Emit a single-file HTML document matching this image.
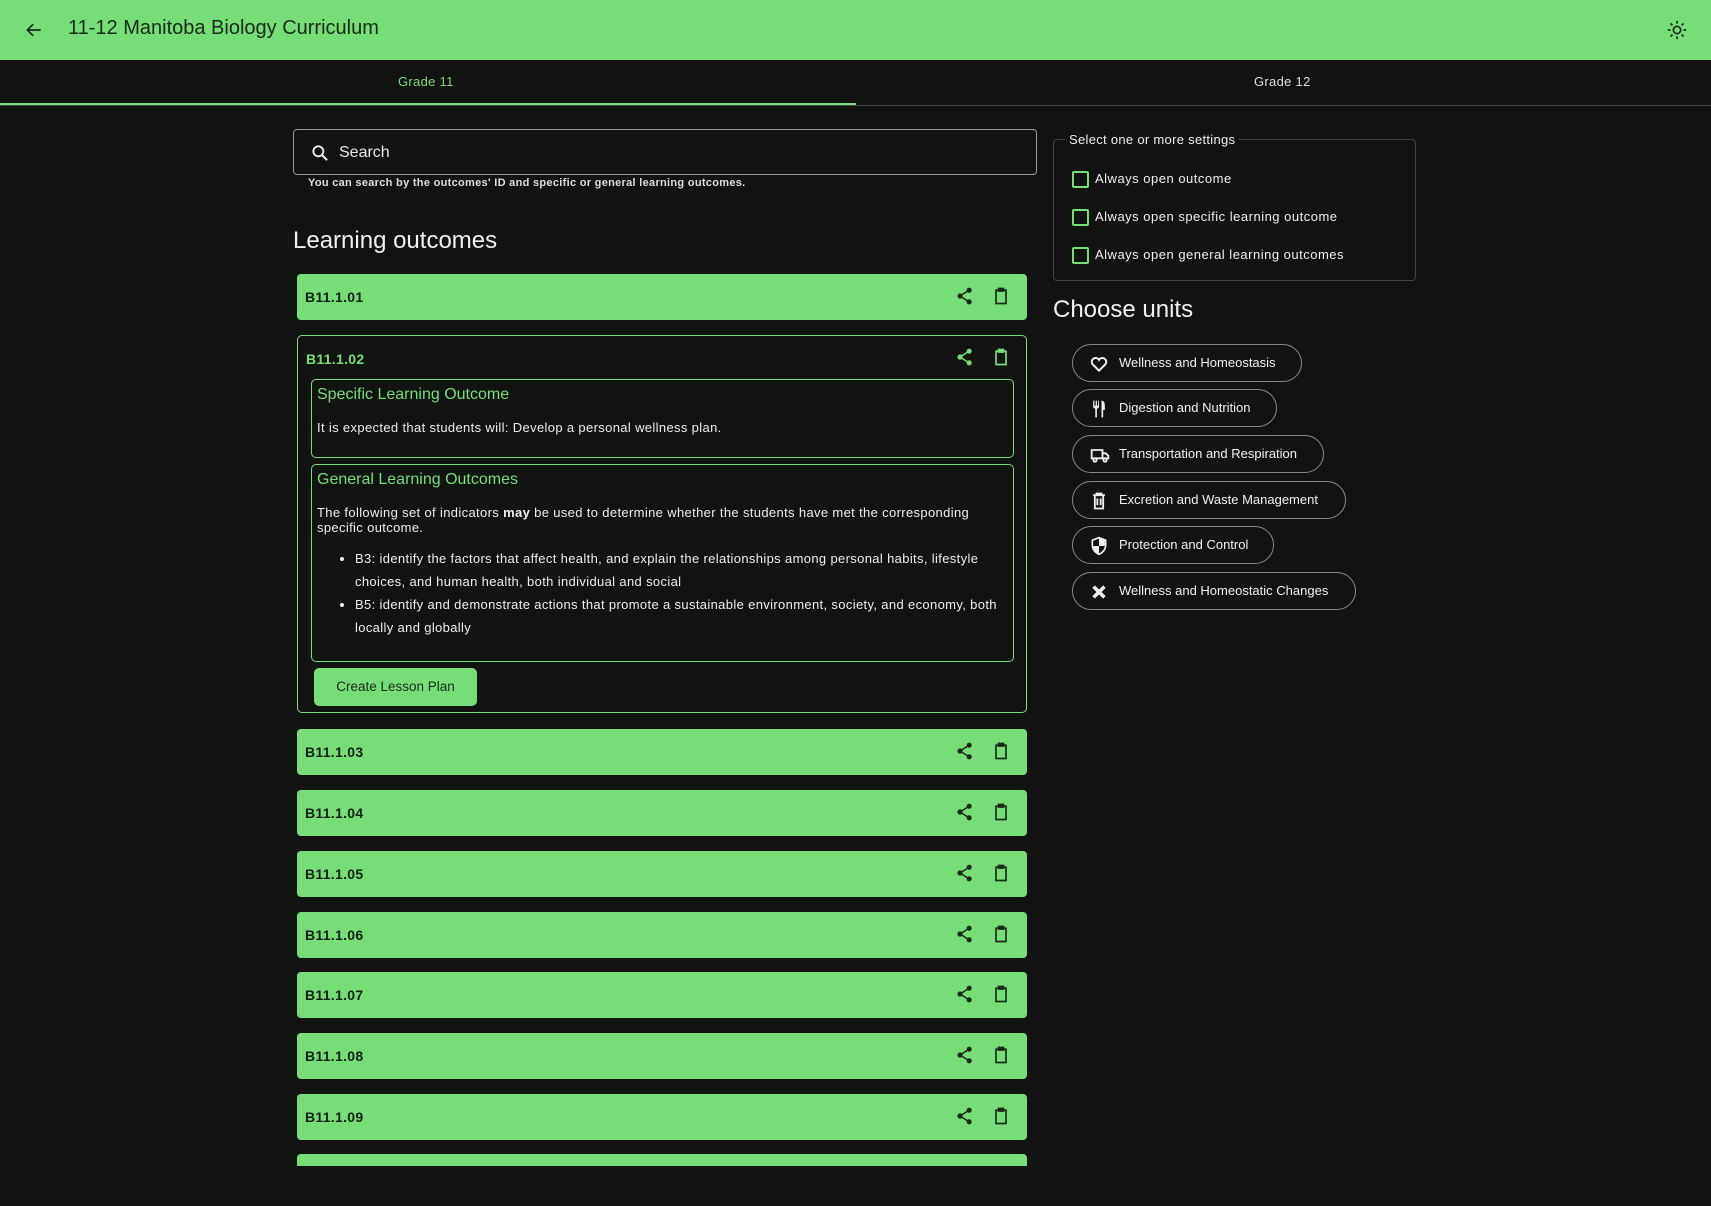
<!DOCTYPE html>
<html><head><meta charset="utf-8"><style>
*{box-sizing:border-box;margin:0;padding:0}
body{width:1711px;height:1199px;background:#121412;font-family:"Liberation Sans",sans-serif;color:#e8e8e8;position:relative;overflow:hidden}
.hdr{position:absolute;left:0;top:0;width:1711px;height:60px;background:#77dd77}
.hdr .t{position:absolute;left:68px;top:17px;font-size:20px;color:#1a2a1a}
.tabs{position:absolute;top:60px;left:0;width:1711px;height:46px;border-bottom:1px solid #444}
.tab{position:absolute;top:14px;font-size:13px;letter-spacing:.3px}
.ind{position:absolute;left:0;top:103px;width:856px;height:2px;background:#77dd77}
.search{position:absolute;left:293px;top:129px;width:744px;height:46px;border:1px solid #999;border-radius:4px}
.search span{position:absolute;left:45px;top:14px;font-size:16px;color:#e8e8e8}
.help{position:absolute;left:308px;top:177px;font-size:11px;color:#ddd;letter-spacing:.3px;font-weight:bold}
h2{position:absolute;font-weight:400;font-size:24px;color:#f0f0f0}
.card{position:absolute;left:297px;width:730px;height:46px;background:#77dd77;border-radius:4px}
.card b,.exp b{position:absolute;left:8px;top:15px;font-size:14px;color:#152015;letter-spacing:.3px}
.exp{position:absolute;left:297px;top:335px;width:730px;height:378px;border:1px solid #77dd77;border-radius:5px}
.exp b{color:#77dd77;top:15px}
.box{position:absolute;left:13px;width:703px;border:1px solid #77dd77;border-radius:5px;padding:6px 5px}
.box h3{font-weight:400;font-size:16px;color:#77dd77}
.box p{font-size:13px;color:#eee;line-height:15px;letter-spacing:.35px}
.box ul{margin:12px 0 0 38px;font-size:13px;line-height:23px;color:#eee;letter-spacing:.35px}
.btn{position:absolute;left:16px;top:332px;width:163px;height:38px;background:#77dd77;border-radius:5px;color:#1a2a1a;font-size:13.5px;text-align:center;line-height:38px}
fieldset{position:absolute;left:1053px;top:132px;width:363px;height:149px;border:1px solid #444;border-radius:4px}
legend{margin-left:11px;padding:0 4px;font-size:13px;color:#eee;letter-spacing:.3px}
.cb{position:absolute;left:1072px;font-size:13px;color:#eee;letter-spacing:.5px}
.cb i{display:inline-block;width:17px;height:17px;border:2px solid #77dd77;border-radius:2px;vertical-align:middle;margin-right:6px}
.chip{position:absolute;left:1072px;height:38px;border:1px solid #888;border-radius:19px;font-size:13px;color:#f0f0f0;line-height:36px;padding-left:46px}
.chip svg{position:absolute;left:16px;top:9px}
</style></head><body>
<div class="hdr">
<svg style="position:absolute;left:24px;top:20px" width="20" height="20" viewBox="0 0 24 24"><path d="M20 12H5M11 5l-7 7 7 7" fill="none" stroke="#1a2a1a" stroke-width="2"/></svg>
<div class="t">11-12 Manitoba Biology Curriculum</div>
<svg style="position:absolute;left:1666px;top:19px" width="22" height="22" viewBox="0 0 24 24" fill="none" stroke="#1a2a1a" stroke-width="1.8"><circle cx="12" cy="12" r="4"/><path d="M12 2v3M12 19v3M2 12h3M19 12h3M4.9 4.9l2.1 2.1M17 17l2.1 2.1M4.9 19.1L7 17M17 7l2.1-2.1"/></svg>
</div>
<div class="tabs"><div class="tab" style="left:398px;color:#77dd77">Grade 11</div><div class="tab" style="left:1254px;color:#ddd">Grade 12</div></div>
<div class="ind"></div>
<div class="search"><svg style="position:absolute;left:16px;top:13px" width="20" height="20" viewBox="0 0 24 24"><circle cx="10" cy="10" r="6" fill="none" stroke="#eee" stroke-width="2.2"/><path d="M14.5 14.5l6 6" stroke="#eee" stroke-width="2.5"/></svg><span>Search</span></div>
<div class="help">You can search by the outcomes' ID and specific or general learning outcomes.</div>
<h2 style="left:293px;top:227px">Learning outcomes</h2>
<h2 style="left:1053px;top:296px">Choose units</h2>

<div class="card" style="top:274px"><b>B11.1.01</b></div>
<div class="exp"><b>B11.1.02</b>
<div class="box" style="top:43px;height:79px"><h3>Specific Learning Outcome</h3><p style="margin-top:16px">It is expected that students will: Develop a personal wellness plan.</p></div>
<div class="box" style="top:128px;height:198px"><h3>General Learning Outcomes</h3><p style="margin-top:16px">The following set of indicators <strong>may</strong> be used to determine whether the students have met the corresponding specific outcome.</p>
<ul><li>B3: identify the factors that affect health, and explain the relationships among personal habits, lifestyle choices, and human health, both individual and social</li><li>B5: identify and demonstrate actions that promote a sustainable environment, society, and economy, both locally and globally</li></ul></div>
<div class="btn">Create Lesson Plan</div>
</div>
<div class="card" style="top:729px"><b>B11.1.03</b></div>
<div class="card" style="top:790px"><b>B11.1.04</b></div>
<div class="card" style="top:851px"><b>B11.1.05</b></div>
<div class="card" style="top:912px"><b>B11.1.06</b></div>
<div class="card" style="top:972px"><b>B11.1.07</b></div>
<div class="card" style="top:1033px"><b>B11.1.08</b></div>
<div class="card" style="top:1094px"><b>B11.1.09</b></div>
<div class="card" style="top:1154px;height:12px;border-radius:4px 4px 0 0"></div>
<div style="position:absolute;left:0;top:1166px;width:1711px;height:40px;background:#121412"></div>

<svg width="0" height="0" style="position:absolute"><defs>
<g id="sh"><circle cx="17" cy="5" r="2.6"/><circle cx="6" cy="12" r="2.6"/><circle cx="17" cy="19" r="2.6"/><path d="M6 12L17 5M6 12l11 7" stroke-width="1.8" fill="none"/></g>
<g id="cl"><path d="M6 5h12v16H6z M9 3h6v3H9z" fill="none" stroke-width="2"/></g>
</defs></svg>
<div id="icons"></div>
<script>
var tops=[274,335,729,790,851,912,972,1033,1094],h='';
tops.forEach(function(t,i){var c=i==1?'#77dd77':'#1a2a1a';
h+='<svg style="position:absolute;left:955px;top:'+(t+12)+'px" width="20" height="20" viewBox="0 0 24 24" fill="'+c+'" stroke="'+c+'"><use href="#sh"/></svg>';
h+='<svg style="position:absolute;left:991px;top:'+(t+12)+'px" width="20" height="20" viewBox="0 0 24 24" fill="none" stroke="'+c+'"><use href="#cl"/></svg>';});
document.getElementById('icons').innerHTML=h;
</script>

<fieldset><legend>Select one or more settings</legend></fieldset>
<div class="cb" style="top:171px"><i></i>Always open outcome</div>
<div class="cb" style="top:209px"><i></i>Always open specific learning outcome</div>
<div class="cb" style="top:247px"><i></i>Always open general learning outcomes</div>

<div class="chip" style="top:344px;width:230px"><svg width="20" height="20" viewBox="0 0 24 24"><path d="M12 20l-8-8a4.5 4.5 0 0 1 8-5 4.5 4.5 0 0 1 8 5z" fill="none" stroke="#eee" stroke-width="2.4"/></svg>Wellness and Homeostasis</div>
<div class="chip" style="top:389px;width:205px"><svg width="20" height="20" viewBox="0 0 24 24" fill="#eee"><path d="M5 2h1.5v6H8V2h1.5v6H11V2h1v7c0 1.5-1 2.5-2.5 2.5V22h-2V11.5C6 11.5 5 10.5 5 9z M15 2c2.5 0 4 2 4 6v5h-2v9h-2z"/></svg>Digestion and Nutrition</div>
<div class="chip" style="top:435px;width:252px"><svg width="22" height="20" viewBox="0 0 24 24" fill="none" stroke="#eee" stroke-width="2.2"><path d="M2 6h13v10H2zM15 10h4l3 3v3h-7"/><circle cx="6" cy="18" r="2" fill="#121412"/><circle cx="18" cy="18" r="2" fill="#121412"/></svg>Transportation and Respiration</div>
<div class="chip" style="top:481px;width:274px"><svg width="20" height="20" viewBox="0 0 24 24" fill="none" stroke="#eee" stroke-width="2.2"><path d="M5 5h14M9 5V3h6v2M7 5v16h10V5M10 9v8M14 9v8"/></svg>Excretion and Waste Management</div>
<div class="chip" style="top:526px;width:202px"><svg width="20" height="20" viewBox="0 0 24 24"><path d="M12 2l8 3v6c0 5-3.5 9-8 11-4.5-2-8-6-8-11V5z" fill="none" stroke="#eee" stroke-width="2"/><path d="M12 3v9H5c0 4 3 8 7 9v-9h7V5z" fill="#eee"/></svg>Protection and Control</div>
<div class="chip" style="top:572px;width:284px"><svg width="20" height="20" viewBox="0 0 24 24" fill="#eee"><path d="M4 7l3-3 13 13-3 3z M17 4l3 3L7 20l-3-3z"/></svg>Wellness and Homeostatic Changes</div>
</body></html>
